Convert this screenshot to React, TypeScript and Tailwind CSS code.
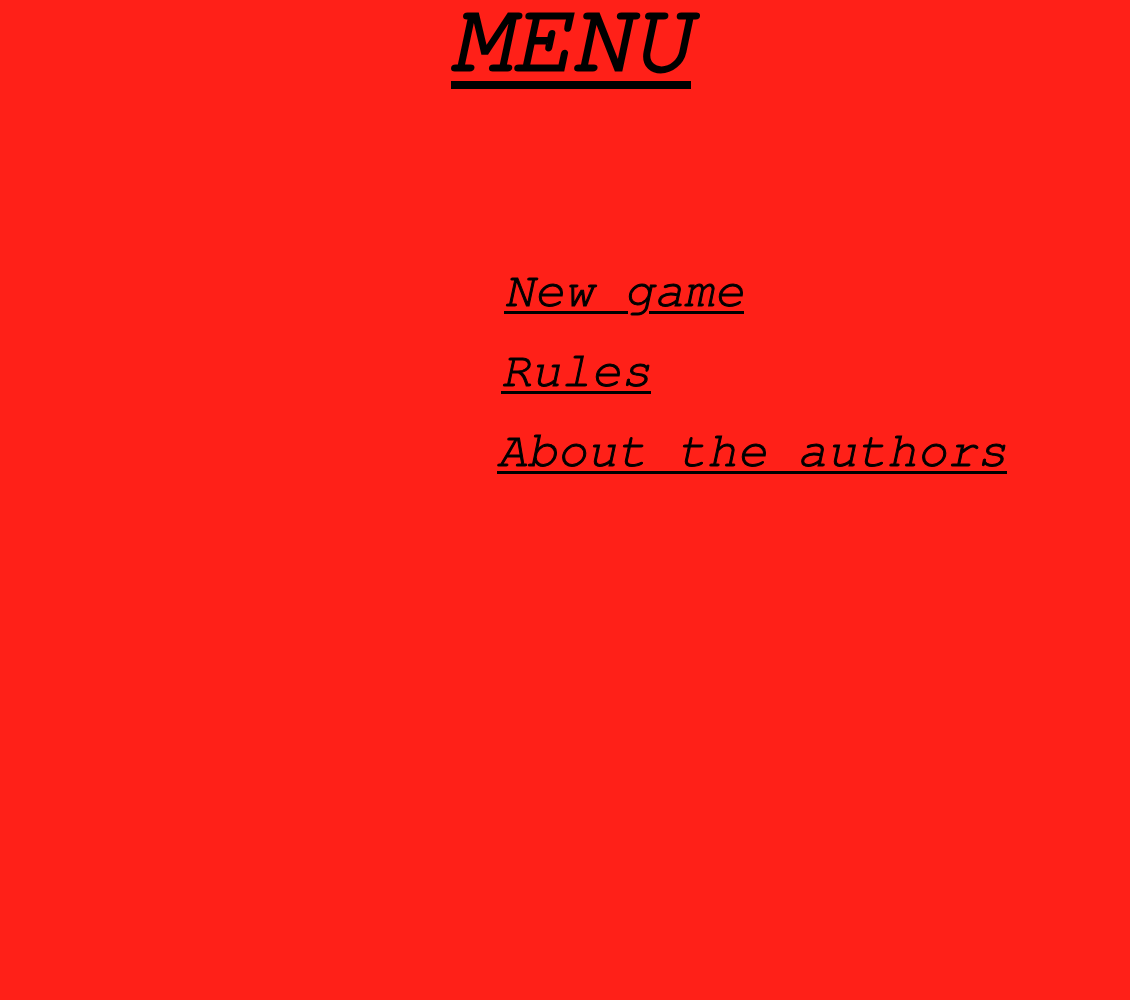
import React from 'react';

const items = [
  { label: 'New game', className: 'ml-[504px]' },
  { label: 'Rules', className: 'ml-[501px]' },
  { label: 'About the authors', className: 'ml-[497px]' },
];

const App = () => {
  return (
    <div className="min-h-screen bg-[#ff2018] text-black font-['FreeMono','Liberation_Mono',monospace] italic pt-[1px]">
      <h1 className="-mt-[11px] pl-[12px] text-center text-[100px] font-normal leading-[100px] [-webkit-text-stroke:3px_black] underline decoration-[8px] underline-offset-[11px]">
        <a href="#">MENU</a>
      </h1>

      {/* menu links */}
      <ul className="mt-[161px] flex flex-col">
        {items.map((item) => (
          <li key={item.label} className={`${item.className} text-[50px] leading-[80px]`}>
            <a href="#" className="underline decoration-[3px] underline-offset-[5px] [-webkit-text-stroke:1px_black]">
              {item.label}
            </a>
          </li>
        ))}
      </ul>
    </div>
  );
};

export default App;
